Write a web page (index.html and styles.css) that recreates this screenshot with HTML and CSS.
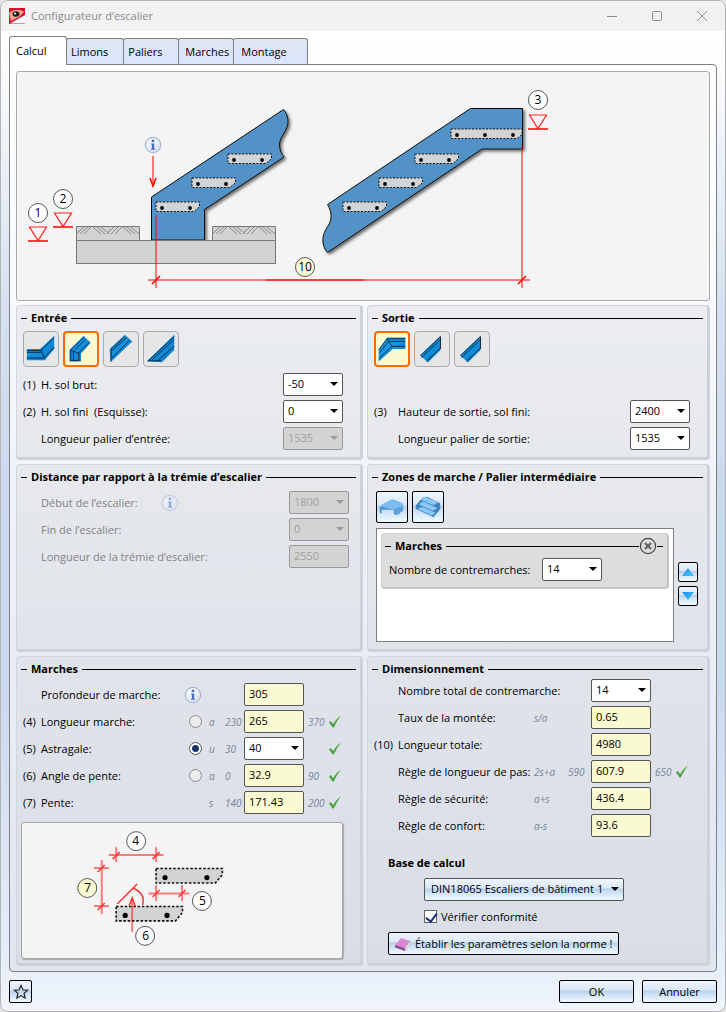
FILE: index.html
```html
<!DOCTYPE html>
<html lang="fr">
<head>
<meta charset="utf-8">
<meta name="viewport" content="width=device-width, initial-scale=1">
<title>Configurateur d’escalier</title>
<link rel="stylesheet" href="styles.css">
</head>
<body>
<svg class="defs" aria-hidden="true">
  <defs>
    <linearGradient id="steel" x1="0" y1="0" x2="1" y2="1"><stop offset="0" stop-color="#1aa6f2"/><stop offset="1" stop-color="#0a78c8"/></linearGradient>
    <linearGradient id="ball" x1="0" y1="0" x2="1" y2="1"><stop offset="0" stop-color="#fff"/><stop offset="1" stop-color="#d3dff0"/></linearGradient>
    <linearGradient id="arrowfill" x1="0" y1="0" x2="1" y2="1"><stop offset="0" stop-color="#1b8ff0"/><stop offset="1" stop-color="#49c4ff"/></linearGradient>
    <filter id="soft" x="-10%" y="-10%" width="125%" height="125%"><feDropShadow dx="2" dy="2" stdDeviation="1.5" flood-color="#000" flood-opacity=".55"/></filter>
    <symbol id="info" viewBox="0 0 18 18">
      <circle cx="9" cy="9" r="7.7" fill="url(#ball)" stroke="#a3b8d6" stroke-width="1.2"/>
      <circle cx="9" cy="4.900" r="1.400" fill="#4a6cc0"/>
      <path d="M7 7.500h3.200v5.200h1v1H6.900v-1h1V8.500H7z" fill="#4a6cc0"/>
    </symbol>
    <symbol id="check" viewBox="0 0 14 13">
      <path d="M1 7.500 2.600 6l2.600 3.100C7.300 5.500 9.700 2.700 13 .5 10.200 4 8 7.800 5.800 12.500H4.700z" fill="#4ba33f"/>
    </symbol>
    <symbol id="tread" viewBox="0 0 46 12">
      <path d="M1 1h43.500v4.500L39 10.500H1z" fill="#d3d3d3" stroke="#111" stroke-dasharray="2 1.500"/>
      <circle cx="7" cy="7" r="1.900"/><circle cx="35" cy="7" r="1.900"/>
    </symbol>
    <symbol id="bigtread" viewBox="0 0 70 17">
      <path d="M1.500 1.500h66.500v6l-7 8.500H1.500z" fill="#d3d3d3" stroke="#111" stroke-width="1.600" stroke-dasharray="2.500 1.800"/>
      <circle cx="10.500" cy="10.500" r="2.600"/><circle cx="52.500" cy="10.500" r="2.600"/>
    </symbol>
    <symbol id="level" viewBox="0 0 20 16">
      <path d="M1.500 1h17L10 14.500z" fill="none" stroke="#f22" stroke-width="1.200"/><path d="M0 15h20" stroke="#f00" stroke-width="1.500"/>
    </symbol>
    <symbol id="hatch" viewBox="0 0 64 15">
      <path d="M.5.5h63v14H.5z" fill="#d3d3d3" stroke="#777"/>
      <path d="M1 7l7-6M4 8l8-7M8 8l7-7M17 1l8 7M21 1l8 7M25 1l8 7M31 7l7-6M35 8l7-7M39 8l7-7M47 1l8 7M51 1l8 7M55 1l8 7" stroke="#888" fill="none"/>
    </symbol>
    <symbol id="upslope" viewBox="0 0 36 36">
      <path d="M5 25 27 4v15L14 32z" fill="url(#steel)"/><path d="M6 25 27 5v13M7 27 27 8M12 31l15-14" fill="none" stroke="#03283f"/>
    </symbol>
  </defs>
</svg>
<div class="window">
  <header class="titlebar">
    <svg class="logo" viewBox="0 0 16 16" aria-hidden="true"><path d="M0 0h16v16H0z" fill="#d4102a"/><path d="M0 5C4 1 11 1 15 4l-5 5-8 4z" fill="#f0a890"/><ellipse cx="7" cy="6" rx="3.500" ry="2.800" fill="#222"/><circle cx="6" cy="5.500" r="1" fill="#fff"/><path d="m1 15.500 15-8.500v8.500z" fill="#fff"/></svg>
    <h1>Configurateur d’escalier</h1>
    <div class="caption">
      <button aria-label="Réduire"><svg viewBox="0 0 12 12"><path d="M1 6.500h10"/></svg></button>
      <button aria-label="Agrandir"><svg viewBox="0 0 12 12"><rect x="1.500" y="1.500" width="9" height="9" rx="1"/></svg></button>
      <button aria-label="Fermer"><svg viewBox="0 0 12 12"><path d="m1 1 10 10M11 1 1 11"/></svg></button>
    </div>
  </header>

  <nav class="tabs" role="tablist">
    <button class="tab active" role="tab" aria-selected="true">Calcul</button>
    <button class="tab" role="tab">Limons</button>
    <button class="tab" role="tab">Paliers</button>
    <button class="tab tight" role="tab">Marches</button>
    <button class="tab wide" role="tab">Montage</button>
  </nav>

  <main class="page">
    <div class="drawing">
      <svg class="overview" viewBox="17 72 692 228" preserveAspectRatio="xMinYMid meet" role="img" aria-label="Vue de l’escalier">
        <path d="M76.500 240.500h199v23h-199z" fill="#d3d3d3" stroke="#777"/>
        <use href="#hatch" x="76" y="226" width="64" height="15"/>
        <use href="#hatch" x="212" y="226" width="64" height="15"/>
        <path d="M151.500 240V197L283.500 109.500C286 112 288 117 288 122 288 130 280 136 279.500 144c0 5 1.500 10 4.500 13L204.500 209.500V240z" fill="#5292c6" stroke="#111" filter="url(#soft)"/>
        <path d="M327.500 204.500 470.500 108.500h52v40.500H482L327.500 252.500C324 249 322.500 243 323 238c1-9 7-12 8-20 .5-5-1-10-3.500-13.500z" fill="#5292c6" stroke="#111" filter="url(#soft)"/>
        <path d="M76.500 240.500h199v23h-199z" fill="#d3d3d3" stroke="#777"/>
        <use href="#tread" x="155" y="201" width="46" height="12"/>
        <use href="#tread" x="191" y="177" width="46" height="12"/>
        <use href="#tread" x="227" y="153" width="46" height="12"/>
        <use href="#tread" x="342" y="201" width="46" height="12"/>
        <use href="#tread" x="378" y="177" width="46" height="12"/>
        <use href="#tread" x="414" y="153" width="46" height="12"/>
        <path d="M451 129h71v5.500l-5 4h-66z" fill="#d3d3d3" stroke="#111" stroke-dasharray="2 1.500"/>
        <circle cx="457" cy="135" r="1.900"/><circle cx="485" cy="135" r="1.900"/><circle cx="513" cy="135" r="1.900"/>
        <use href="#info" x="144" y="136" width="18" height="18"/>
        <path class="dim" d="M153 156v30M156 215v73M522 145v143M148 280h382"/>
        <path class="dim" d="M266 280h98"/>
        <path class="mark" d="m150 178 3 8 3-8M152 284l8-8M518 284l8-8"/>
        <use href="#level" x="28" y="226" width="20" height="16"/>
        <use href="#level" x="53" y="212" width="20" height="16"/>
        <use href="#level" x="528" y="114" width="20" height="16"/>
        <g class="balloon">
          <circle cx="38" cy="213" r="9.500"/><text x="38" y="217">1</text>
          <circle cx="63" cy="199" r="9.500"/><text x="63" y="203">2</text>
          <circle cx="538" cy="100" r="9.500"/><text x="538" y="104">3</text>
          <circle class="hot" cx="305" cy="267" r="9.500"/><text x="305" y="271">10</text>
        </g>
      </svg>
    </div>

    <div class="groups">
      <section class="group entry">
        <h2>Entrée</h2>
        <div class="shapes">
          <button class="shape" aria-label="Entrée avec palier"><svg viewBox="0 0 36 36"><path d="M3 18h14L32 4v14L22 30H3z" fill="url(#steel)"/><path d="M3 19.500h15L32 6M3 21.500h15M3 27.500h18L32 16M18 19l4 9" fill="none" stroke="#03283f"/></svg></button>
          <button class="shape chosen" aria-label="Entrée coudée"><svg viewBox="0 0 36 36"><path d="M5 19 21 3l8 8-11 12v9H5z" fill="url(#steel)"/><path d="M6.500 31V19L21 5M9.500 31V20M15.500 31v-9L27 11M6 19l10 4M11 19 23 7M6 31h10" fill="none" stroke="#03283f"/></svg></button>
          <button class="shape" aria-label="Entrée verticale"><svg viewBox="0 0 36 36"><path d="M6 18 22 3l8 7L7 32z" fill="url(#steel)"/><path d="M7.500 31V18L22 5M8 20 24 6M8 28 27 9" fill="none" stroke="#03283f"/></svg></button>
          <button class="shape" aria-label="Entrée horizontale"><svg viewBox="0 0 36 36"><path d="M3 31 32 3v16L19 32z" fill="url(#steel)"/><path d="M5 30 32 5M8 30 32 8M15 30l17-15M4 30.500h14" fill="none" stroke="#03283f"/></svg></button>
        </div>
        <div class="row"><span>(1)</span><label for="brut">H. sol brut:</label><span class="combo"><select id="brut"><option>-50</option></select></span></div>
        <div class="row"><span>(2)</span><label for="fini">H. sol fini &nbsp;(Esquisse):</label><span class="combo"><select id="fini"><option>0</option></select></span></div>
        <div class="row"><span></span><label for="lpe">Longueur palier d’entrée:</label><span class="combo off"><select id="lpe" disabled><option>1535</option></select></span></div>
      </section>

      <section class="group right">
        <h2>Sortie</h2>
        <div class="shapes">
          <button class="shape chosen" aria-label="Sortie coudée"><svg viewBox="0 0 36 36"><path d="M3 19 12.500 5H33v13H19L3 32z" fill="url(#steel)"/><path d="M3 19 12.500 6.500H33M4 22 14 9.500h19M3 29l15-14h15M12.500 7l5.500 8" fill="none" stroke="#03283f"/></svg></button>
          <button class="shape" aria-label="Sortie verticale"><svg viewBox="0 0 36 36"><use href="#upslope"/></svg></button>
          <button class="shape" aria-label="Sortie droite"><svg viewBox="0 0 36 36"><use href="#upslope"/></svg></button>
        </div>
        <div class="row last"><span>(3)</span><label for="hso">Hauteur de sortie, sol fini:</label><span class="combo"><select id="hso"><option>2400</option></select></span></div>
        <div class="row"><span></span><label for="lps">Longueur palier de sortie:</label><span class="combo"><select id="lps"><option>1535</option></select></span></div>
      </section>

      <section class="group distance">
        <h2>Distance par rapport à la trémie d’escalier</h2>
        <div class="row"><span></span><span class="withinfo"><label for="debut">Début de l’escalier:</label><svg class="info"><use href="#info"/></svg></span><span class="combo off"><select id="debut" disabled><option>1800</option></select></span></div>
        <div class="row"><span></span><label for="fin">Fin de l’escalier:</label><span class="combo off"><select id="fin" disabled><option>0</option></select></span></div>
        <div class="row"><span></span><label for="tremie">Longueur de la trémie d’escalier:</label><input id="tremie" class="field" disabled value="2550"></div>
      </section>

      <section class="group right">
        <h2>Zones de marche / Palier intermédiaire</h2>
        <div class="zones">
          <div class="tools">
            <button class="push tool" aria-label="Ajouter un palier"><svg viewBox="0 0 32 32"><path d="m3 16 14-8 10 4 1 3-4 5v4l-6-1v-4L5 19v4l-2-1z" fill="#4d93d0"/><path d="m3 15 12-7 12 4 1 3-10 4z" fill="#79bdf2"/><path d="m18 19 10-4v5l-8 5-2-2z" fill="#5f9fd6"/></svg></button>
            <button class="push tool" aria-label="Ajouter des marches"><svg viewBox="0 0 32 32"><path d="M3 14 10 6l5-1 14 7v6l-7 9-19-9z" fill="#4484bd"/><path d="m8 8 4-3 15 6-5 3zM6 13l5-3 15 7-5 3zM5 18l5-2 14 6-4 3z" fill="#8cc8f7"/></svg></button>
          </div>
          <div class="listline">
            <div class="list">
              <div class="item">
                <div class="itemhead"><h3>Marches</h3><button class="close" aria-label="Supprimer"><svg viewBox="0 0 18 18"><circle cx="9" cy="9" r="7.600" fill="#ddd" stroke="#444" stroke-width="1.200"/><path d="m6 6 6 6M12 6l-6 6" stroke="#666" stroke-width="2.400"/></svg></button></div>
                <div class="itemrow"><label for="nbc">Nombre de contremarches:</label><span class="combo"><select id="nbc"><option>14</option></select></span></div>
              </div>
            </div>
            <div class="mover">
              <button class="push" aria-label="Monter"><svg viewBox="0 0 18 18"><path d="m9 5 6 8H3z" fill="url(#arrowfill)"/></svg></button>
              <button class="push" aria-label="Descendre"><svg viewBox="0 0 18 18"><path d="m9 13 6-8H3z" fill="url(#arrowfill)"/></svg></button>
            </div>
          </div>
        </div>
      </section>

      <section class="group steps">
        <h2>Marches</h2>
        <div class="row"><span></span><label for="prof">Profondeur de marche:</label><svg class="info"><use href="#info"/></svg><i></i><i></i><input id="prof" class="field calc" value="305"></div>
        <div class="row"><span>(4)</span><label for="lm">Longueur marche:</label><input type="radio" name="mode" aria-label="a"><i>a</i><i>230</i><input id="lm" class="field calc" value="265"><i class="max">370</i><svg class="ok"><use href="#check"/></svg></div>
        <div class="row"><span>(5)</span><label for="ast">Astragale:</label><input type="radio" name="mode" aria-label="u" checked><i>u</i><i>30</i><span class="combo"><select id="ast"><option>40</option></select></span><i class="max"></i><svg class="ok"><use href="#check"/></svg></div>
        <div class="row"><span>(6)</span><label for="ang">Angle de pente:</label><input type="radio" name="mode" aria-label="α"><i>α</i><i>0</i><input id="ang" class="field calc" value="32.9"><i class="max">90</i><svg class="ok"><use href="#check"/></svg></div>
        <div class="row"><span>(7)</span><label for="pente">Pente:</label><span></span><i>s</i><i>140</i><input id="pente" class="field calc" value="171.43"><i class="max">200</i><svg class="ok"><use href="#check"/></svg></div>
        <div class="drawing small">
          <svg class="detail" viewBox="22 823 321 135" preserveAspectRatio="xMinYMid meet" role="img" aria-label="Détail des marches">
            <use href="#bigtread" x="155" y="867" width="70" height="17"/>
            <use href="#bigtread" x="115" y="905" width="70" height="17"/>
            <path class="dim" d="M109 855h55M116.500 847v15M156.500 847v15M102 860v54M94 868h15M94 906h15M149 893.500h41M156.500 885v16M182.500 885v16M132.500 932v-32"/>
            <path class="mark thin" d="m113 859 7-7M153 859l7-7M98 872l7-7M98 910l7-7M153 897l7-7M179 897l7-7M117.500 904l20-20M133 888c8 3 12 9 10 17M129.500 906l3-8 3 8"/>
            <g class="balloon">
              <circle cx="136.500" cy="841" r="9.500"/><text x="136" y="845">4</text>
              <circle class="hot" cx="87.500" cy="888" r="9.500"/><text x="88" y="892">7</text>
              <circle cx="202.500" cy="901" r="9.500"/><text x="203" y="905">5</text>
              <circle cx="145.500" cy="936" r="9.500"/><text x="146" y="940">6</text>
            </g>
          </svg>
        </div>
      </section>

      <section class="group right sizing">
        <h2>Dimensionnement</h2>
        <div class="row"><span></span><label for="tot">Nombre total de contremarche:</label><i></i><i></i><span class="combo"><select id="tot"><option>14</option></select></span></div>
        <div class="row"><span></span><label for="taux">Taux de la montée:</label><i>s/a</i><i></i><input id="taux" class="field calc" value="0.65"></div>
        <div class="row"><span>(10)</span><label for="lt">Longueur totale:</label><i></i><i></i><input id="lt" class="field calc" value="4980"></div>
        <div class="row"><span></span><label for="pas">Règle de longueur de pas:</label><i>2s+a</i><i>590</i><input id="pas" class="field calc" value="607.9"><i class="max">650</i><svg class="ok"><use href="#check"/></svg></div>
        <div class="row"><span></span><label for="secu">Règle de sécurité:</label><i>a+s</i><i></i><input id="secu" class="field calc" value="436.4"></div>
        <div class="row"><span></span><label for="conf">Règle de confort:</label><i>a-s</i><i></i><input id="conf" class="field calc" value="93.6"></div>
        <div class="basis">
          <h3><label for="norme">Base de calcul</label></h3>
          <span class="combo norm"><select id="norme"><option>DIN18065 Escaliers de bâtiment 1</option></select></span>
          <label class="verify"><input type="checkbox" checked>Vérifier conformité</label>
          <button class="push apply"><svg viewBox="0 0 16 16" aria-hidden="true"><path d="M0 9 6 2l9 3-5 7z" fill="#dc86d6"/><path d="m0 9 10 3v3L0 11.500z" fill="#8d4b96"/><path d="m10 12 5-7v3l-5 7z" fill="#eee" stroke="#999" stroke-width=".5"/></svg>Établir les paramètres selon la norme !</button>
        </div>
      </section>
    </div>
  </main>

  <footer class="footer">
    <button class="push star" aria-label="Favoris"><svg viewBox="0 0 16 16"><path d="m8 1.500 1.900 4.300 4.700.5-3.500 3.100 1 4.600L8 11.600 3.900 14l1-4.600L1.400 6.300l4.700-.5z" fill="none" stroke="#222" stroke-width="1.200"/></svg></button>
    <div class="answers"><button class="push">OK</button><button class="push">Annuler</button></div>
  </footer>
</div>
</body>
</html>
```
FILE: styles.css
```css
* { box-sizing: border-box; }
body {
  margin: 0;
  background: #e6e6e6;
  color: #000;
  font: 11px/16px "Open Sans", "Noto Sans", sans-serif;
}
button, input, select { font: inherit; color: inherit; margin: 0; }
button { padding: 0; cursor: default; }
svg { display: block; }
h1, h2, h3 { margin: 0; font-size: 11px; line-height: 16px; }
.defs { position: absolute; width: 0; height: 0; }

.window {
  display: flex;
  flex-direction: column;
  min-height: 100vh;
  border: 1px solid #b4b4b4;
  border-radius: 8px;
  overflow: hidden;
  background: linear-gradient(#fff 4%, #d5e1f1 30%, #c9d9ee 50%, #c9d9ee 68%, #e6eefa 95%, #f0f5fd);
}
.titlebar {
  display: flex;
  align-items: center;
  height: 30px;
  padding-left: 8px;
  background: #f2f2f2;
  color: #8a8a8a;
}
.titlebar h1 { flex: 1; padding-left: 6px; font-weight: 400; }
.logo { width: 16px; height: 16px; }
.caption { display: flex; padding-right: 1px; }
.caption button {
  display: grid;
  place-items: center;
  width: 45px;
  height: 30px;
  border: 0;
  background: none;
}
.caption svg { width: 12px; height: 12px; fill: none; stroke: #8a8a8a; }

.tabs { display: flex; align-items: flex-end; padding: 5px 8px 0; }
.tab {
  min-width: 56px;
  height: 26px;
  margin-left: -1px;
  padding: 0 15px 0 4px;
  border: 1px solid #808080;
  border-bottom: 0;
  border-radius: 3px 3px 0 0;
  background: linear-gradient(#dfe6f1, #dae5ff);
  text-align: left;
}
.tab.tight { padding: 0 4px 0 6px; }
.tab.wide { padding: 0 20px 0 7px; }
.tab.active {
  z-index: 1;
  width: 58px;
  height: 29px;
  margin: 0 0 -1px;
  padding: 0 6px 1px;
  background: #fff;
}

.page {
  flex: 1;
  margin: 0 8px;
  padding: 6px 6px 5px;
  border: 1px solid #808080;
  border-radius: 0 4px 4px 4px;
  background: linear-gradient(#fff, #f8fafd 25%, #e9edf6 65%, #dfe5f1);
}
.drawing {
  border: 1px solid #a5a8a8;
  border-radius: 3px;
  background: #f4f4f4;
}
.drawing svg { width: 100%; }
.overview { height: 228px; }
.detail { height: 135px; }
.dim { fill: none; stroke: #f00; stroke-width: 2; stroke-opacity: .5; }
.mark { fill: none; stroke: #f00; stroke-width: 1.5; }
.mark.thin { stroke: #f33; }
.balloon circle { fill: #fff; stroke: #555; }
.balloon .hot { fill: #fafad2; }
.balloon text { font-size: 12px; text-anchor: middle; }

.groups {
  display: grid;
  grid-template-columns: 347fr 343fr;
  gap: 4px;
  padding-top: 4px;
}
.group {
  --num: 18px;
  min-width: 0;
  padding: 4px 4px 4px 6px;
  border: 1px solid #d2d6dc;
  border-right: 3px solid #cdd1d8;
  border-bottom: 3px solid #cdd1d8;
  border-radius: 4px;
  background: rgba(200, 200, 200, .25);
}
.group.entry { padding-bottom: 5px; }
.group.right { --num: 24px; }
.group h2, .itemhead {
  display: flex;
  align-items: center;
  gap: 4px;
  margin: 0 0 4px -2px;
}
.group h2::before, .itemhead::before { content: ""; width: 6px; height: 1px; background: #000; }
.group h2::after { content: ""; flex: 1; height: 1px; background: #000; }

.shapes { display: flex; gap: 4px; padding: 1px 0 4px; }
.shape {
  width: 36px;
  height: 36px;
  border: 1px solid #aaa;
  border-radius: 4px;
  background: #e6e6e6;
}
.shape svg { width: 34px; height: 34px; }
.shape.chosen { border: 2px solid #ff6a00; background: #fafad2; }
.shape.chosen svg { width: 32px; height: 32px; }

.row {
  display: grid;
  grid-template-columns: var(--num) minmax(0, 1fr) 60px;
  align-items: center;
  height: 27px;
  margin-right: 13px;
  white-space: nowrap;
}
.row.last { margin-top: 27px; }
.field, .combo select {
  width: 100%;
  height: 23px;
  padding: 0 4px 2px;
  border: 1px solid #555;
  border-radius: 2px;
  background: #fff;
}
.field.calc { background: #fafad2; }
.field:disabled, .combo select:disabled {
  border-color: #999;
  background: #d3d3d3;
  color: #a0a0a0;
  opacity: 1;
}
.combo { position: relative; display: block; }
.combo select { appearance: none; }
.combo::after {
  content: "";
  position: absolute;
  top: 9px;
  right: 5px;
  border: 4px solid transparent;
  border-top: 4px solid #000;
  border-bottom: 0;
  pointer-events: none;
}
.combo.off::after { border-top-color: #999; }

.distance .row { margin-right: 7px; color: #838383; }
.withinfo { display: grid; grid-template-columns: 120px 1fr; align-items: center; }
.distance .info { opacity: .5; }
.info { width: 18px; height: 18px; }

.steps .row { grid-template-columns: 18px minmax(0, 1fr) 24px 16px 19px 60px 24px 14px; margin-right: 14px; }
.sizing .row { grid-template-columns: 24px minmax(0, 1fr) 34px 23px 60px 24px 14px; margin-right: 14px; }
.row i { font-size: 10px; color: #78869a; }
.row .max { padding-left: 4px; }
.ok { width: 14px; height: 13px; }
.steps .info { margin-left: -1px; }

input[type="radio"], input[type="checkbox"] {
  appearance: none;
  width: 13px;
  height: 13px;
  border: 1px solid #8a8a8a;
  background: #ececec;
}
input[type="radio"] { border-radius: 50%; margin-left: 4px; }
input[type="radio"]:checked { border-color: #555; background: radial-gradient(circle, #14306f 0 3px, #fff 4px); }
.verify input { position: relative; background: #fff; border-color: #666; }
.verify input:checked::after {
  content: "";
  position: absolute;
  left: 3px;
  top: 0;
  width: 5px;
  height: 9px;
  border: solid #14307f;
  border-width: 0 2px 2px 0;
  transform: rotate(38deg);
}
.small { margin: 6px 13px 0 -2px; box-shadow: 1px 1px 1px #aaa; }

.push {
  display: flex;
  align-items: center;
  justify-content: center;
  border: 1px solid #000;
  border-radius: 2px;
  background: linear-gradient(#eef5fc, #dce8f5 42%, #b9d0ea 48%, #cfe2f5 65%, #edfaff);
}
.zones { padding: 2px 0 3px 2px; }
.tools { display: flex; gap: 4px; margin-bottom: 5px; }
.tool { width: 32px; height: 32px; }
.tool svg { width: 30px; height: 30px; }
.listline { display: flex; gap: 4px; margin-right: 5px; }
.list {
  flex: 1;
  min-height: 114px;
  padding: 4px;
  border: 1px solid #808080;
  background: #fff;
}
.item {
  padding: 4px 4px 2px 7px;
  border: 1px solid #d0d0d0;
  border-right: 2px solid #c4c4c4;
  border-bottom: 2px solid #c4c4c4;
  border-radius: 4px;
  background: #ddd;
}
.itemhead { height: 16px; margin: 0 0 0 -4px; }
.itemhead h3 { flex: 1; display: flex; align-items: center; gap: 4px; }
.itemhead h3::after { content: ""; flex: 1; height: 1px; margin-right: -4px; background: #000; }
.itemhead::after { content: ""; width: 6px; height: 1px; margin-left: -4px; background: #000; }
.close { border: 0; background: none; }
.close svg { width: 18px; height: 18px; }
.itemrow { display: grid; grid-template-columns: 153px 60px; align-items: center; height: 31px; }
.mover { display: flex; flex-direction: column; gap: 4px; padding-top: 34px; }
.mover .push { width: 20px; height: 20px; }
.mover svg { width: 18px; height: 18px; }

.sizing h2 { margin-bottom: 0; }
.basis { display: flex; flex-direction: column; align-items: flex-start; gap: 4px; padding: 16px 0 3px 14px; }
.norm { width: 200px; margin: 3px 0 0 36px; }
.norm select {
  padding: 0 6px 1px;
  background: linear-gradient(#eef5fc, #dce8f5 42%, #b9d0ea 48%, #cfe2f5 65%, #edfaff);
}
.verify { display: flex; align-items: center; gap: 4px; height: 23px; margin-left: 36px; }
.apply { height: 23px; padding: 0 6px; gap: 4px; }
.apply svg { width: 16px; height: 16px; }

.footer { display: flex; justify-content: space-between; padding: 8px; }
.footer .push { height: 23px; }
.footer .star { width: 23px; }
.star svg { width: 16px; height: 16px; }
.answers { display: flex; gap: 8px; }
.answers .push { width: 75px; }
```
